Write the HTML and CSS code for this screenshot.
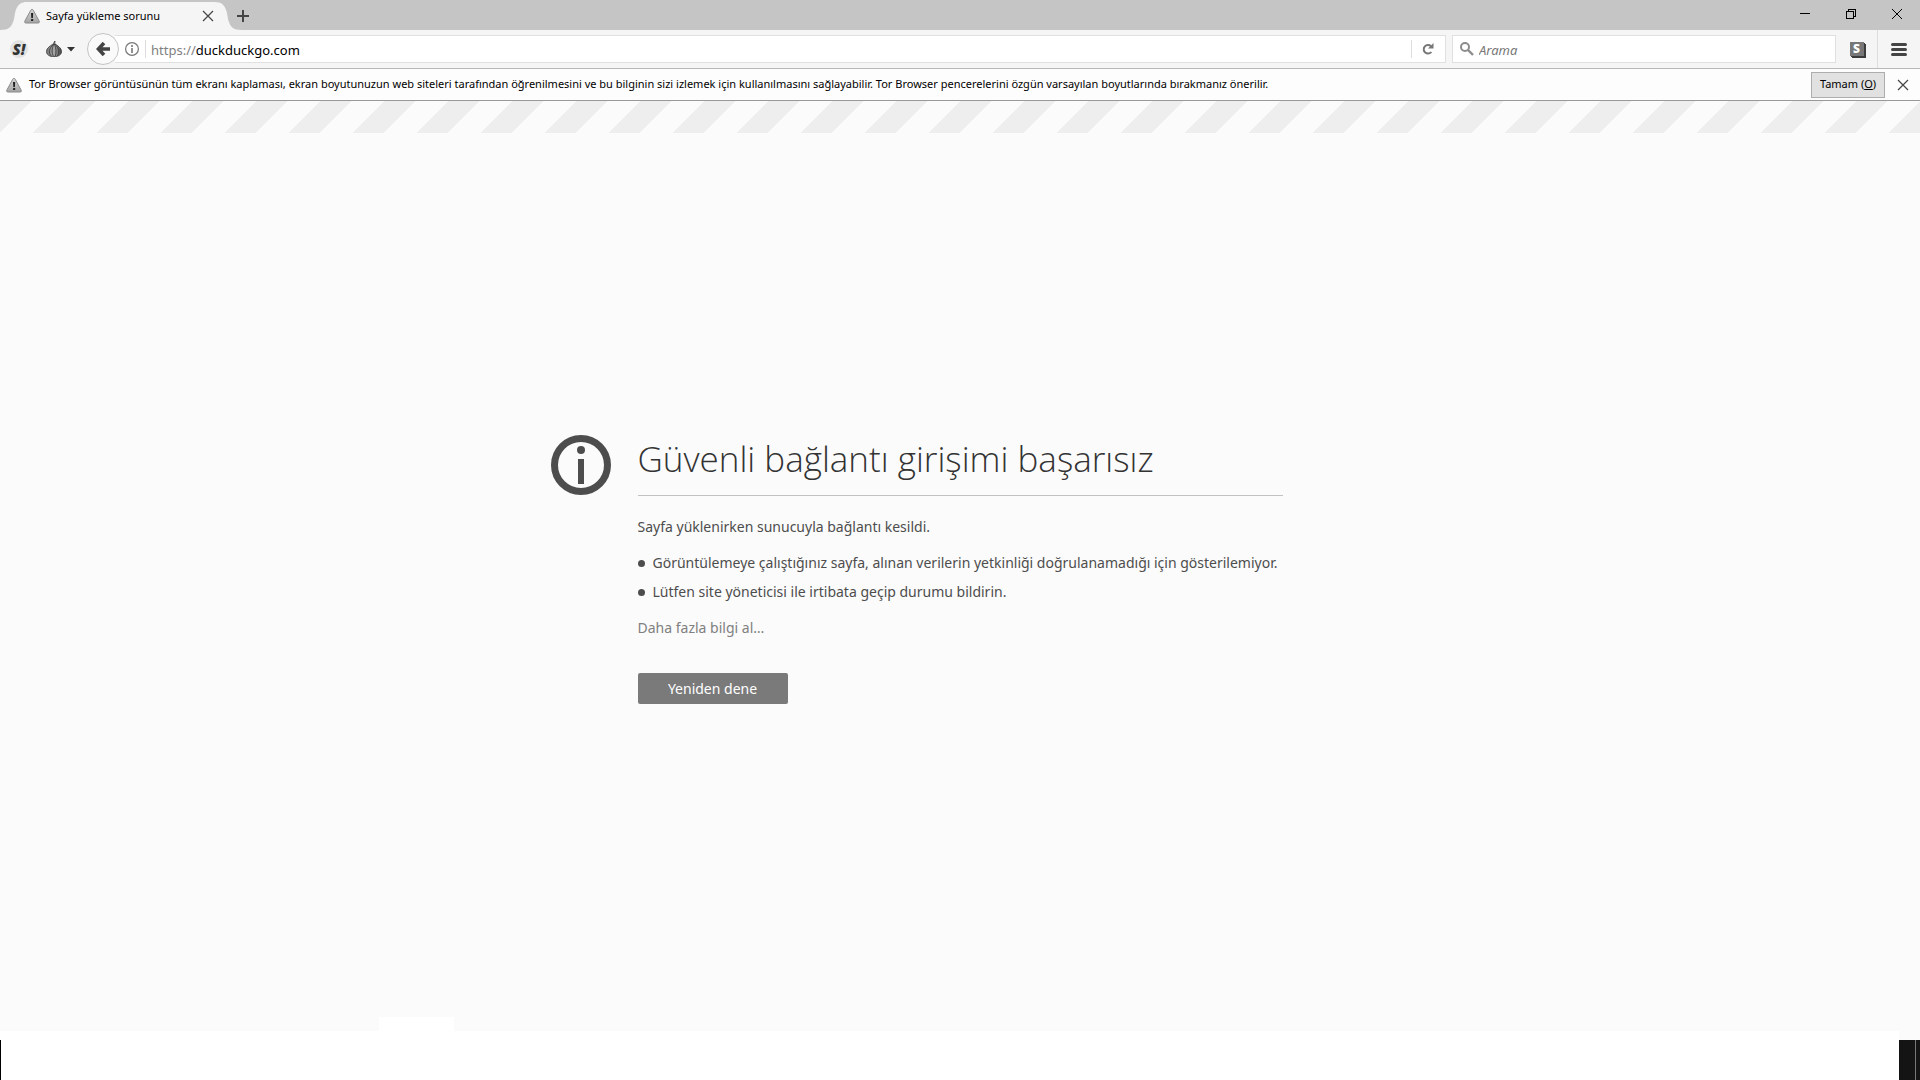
FILE: index.html
```html
<!DOCTYPE html>
<html lang="tr">
<head>
    <meta charset="UTF-8">
    <meta name="viewport" content="width=device-width, initial-scale=1.0">
    <title>Sayfa yükleme sorunu</title>
    <link rel="stylesheet" href="styles.css">
</head>
<body>
    <svg class="defs" width="0" height="0" aria-hidden="true">
        <defs>
            <linearGradient id="metal" x1="0" y1="0" x2="0" y2="1">
                <stop offset="0" stop-color="#d8d8d8"/>
                <stop offset="1" stop-color="#a4a4a4"/>
            </linearGradient>
            <linearGradient id="onion-skin" x1="0" y1="0" x2="1" y2="0">
                <stop offset="0" stop-color="#777"/>
                <stop offset="0.5" stop-color="#aaa"/>
                <stop offset="1" stop-color="#444"/>
            </linearGradient>
            <symbol id="warning" viewBox="0 0 16 16">
                <path d="M8 1.3 Q8.7 1.3 9.2 2.2 L15.2 13.2 Q15.8 15 14.2 15 H1.8 Q.2 15 .8 13.2 L6.8 2.2 Q7.3 1.3 8 1.3Z" fill="url(#metal)" stroke="#8a8a8a"/>
                <path d="M7 5h2.2l-.3 5H7.3z" fill="#222"/>
                <rect x="7" y="11" width="2.2" height="2" rx="0.6" fill="#222"/>
            </symbol>
            <symbol id="cross" viewBox="0 0 12 12">
                <path d="M1 1l10 10M11 1L1 11" fill="none" stroke="currentColor" stroke-width="1.2"/>
            </symbol>
        </defs>
    </svg>

    <!-- Tabs and window buttons -->
    <header class="titlebar">
        <div class="tab">
            <svg class="tab-edge" viewBox="0 0 28 28"><path d="M0 28C9 28 12 25 14 17L15 11C17 3 20 0 28 0V28Z"/></svg>
            <div class="tab-body">
                <svg class="icon"><use href="#warning"/></svg>
                <span class="tab-title">Sayfa yükleme sorunu</span>
                <button class="close" aria-label="Sekmeyi kapat"><svg><use href="#cross"/></svg></button>
            </div>
            <svg class="tab-edge" viewBox="0 0 28 28"><path d="M28 28C19 28 16 25 14 17L13 11C11 3 8 0 0 0V28Z"/></svg>
        </div>
        <button class="new-tab" aria-label="Yeni sekme">
            <svg width="12" height="12"><path d="M6 0v12M0 6h12" stroke="#444" stroke-width="2"/></svg>
        </button>
        <div class="window-buttons">
            <button aria-label="Simge durumuna küçült"><svg width="10" height="10" shape-rendering="crispEdges"><path d="M0 4.5h10" stroke="#000"/></svg></button>
            <button aria-label="Geri yükle"><svg width="10" height="10" shape-rendering="crispEdges"><path d="M.5 2.5h7v7h-7zM2.5 2V.5h7v7H8" fill="none" stroke="#000"/></svg></button>
            <button aria-label="Kapat"><svg width="10" height="10"><path d="M0 0l10 10M10 0L0 10" stroke="#000"/></svg></button>
        </div>
    </header>

    <!-- Address and search -->
    <nav class="navbar">
        <button class="tool script" aria-label="NoScript"><span class="script-mark">S!</span></button>
        <button class="tool onion" aria-label="Tor">
            <svg width="16" height="16" viewBox="0 0 16 16">
                <path d="M9 0C8.2.8 7.800 1.600 7.700 2.600 5.500 4.200.5 6.600.5 10.600.5 14 4 15.700 8 15.700s7.500-1.700 7.500-5.100C15.500 6.600 11 4.600 8.800 2.600 8.700 1.700 8.800.8 9 0z" fill="url(#onion-skin)" stroke="#333" stroke-width="0.8"/>
                <path d="M7.800 3C3 7.200 2 12 5.500 15.200M8 3C5.600 7.500 5.600 12 7.500 15.300M8.400 3c2 4.500 2 8.500.8 12.300M8.700 3c4.600 4.300 5 8.500 2.700 11.900" fill="none" stroke="#333" stroke-width="0.8"/>
            </svg>
            <svg width="8" height="5"><path d="M0 0h8L4 4.5z" fill="#333"/></svg>
        </button>
        <div class="location">
            <button class="back" aria-label="Geri">
                <svg width="14" height="14" viewBox="0 0 14 14"><path d="M8 1L2.400 7l5.600 6M2.500 7H14" fill="none" stroke="#444" stroke-width="3.6"/></svg>
            </button>
            <form class="urlbar">
                <button class="identity" type="button" aria-label="Site bilgileri">
                    <svg width="14" height="14"><circle cx="7" cy="7" r="6.4" fill="none" stroke="#777" stroke-width="1.2"/><path d="M7 6v5M7 3v2" stroke="#777" stroke-width="1.6"/></svg>
                </button>
                <div class="url" role="textbox" contenteditable="true" aria-label="Adres"><span class="scheme">https://</span>duckduckgo.com</div>
                <button class="reload" type="button" aria-label="Yenile">
                    <svg width="12" height="12"><path d="M9 3.200A4.300 4.300 0 1 0 9.400 9" fill="none" stroke="#777" stroke-width="2"/><path d="M11.500 0v5.500H6z" fill="#777"/></svg>
                </button>
            </form>
        </div>
        <form class="search">
            <svg width="14" height="14"><circle cx="5" cy="5" r="4" fill="none" stroke="#8c8c8c" stroke-width="2"/><path d="M8 8l5 5" stroke="#8c8c8c" stroke-width="2.4"/></svg>
            <input type="search" placeholder="Arama" aria-label="Arama">
        </form>
        <button class="tool cube" aria-label="HTTPS Everywhere"><span class="cube-mark">S</span></button>
        <button class="tool menu" aria-label="Menü">
            <svg width="16" height="13"><path d="M1.500 1.500h13M1.500 6.500h13M1.500 11.500h13" stroke="#444" stroke-width="3" stroke-linecap="round"/></svg>
        </button>
    </nav>

    <div class="notification" role="alert">
        <svg class="icon"><use href="#warning"/></svg>
        <p>Tor Browser görüntüsünün tüm ekranı kaplaması, ekran boyutunuzun web siteleri tarafından öğrenilmesini ve bu bilginin sizi izlemek için kullanılmasını sağlayabilir. Tor Browser pencerelerini özgün varsayılan boyutlarında bırakmanız önerilir.</p>
        <button class="ok">Tamam (<u>O</u>)</button>
        <button class="close" aria-label="Bildirimi kapat"><svg><use href="#cross"/></svg></button>
    </div>

    <main class="page">
        <section class="error">
            <svg class="error-icon" viewBox="0 0 60 60">
                <circle cx="30" cy="30" r="26.5" fill="none" stroke="#4d4d4d" stroke-width="7"/>
                <circle cx="30" cy="15" r="4"/>
                <rect x="27" y="24" width="6" height="25"/>
            </svg>
            <div class="error-text">
                <h1>Güvenli bağlantı girişimi başarısız</h1>
                <p>Sayfa yüklenirken sunucuyla bağlantı kesildi.</p>
                <ul>
                    <li>Görüntülemeye çalıştığınız sayfa, alınan verilerin yetkinliği doğrulanamadığı için gösterilemiyor.</li>
                    <li>Lütfen site yöneticisi ile irtibata geçip durumu bildirin.</li>
                </ul>
                <a href="#">Daha fazla bilgi al…</a>
                <button class="retry">Yeniden dene</button>
            </div>
        </section>
    </main>

    <footer class="bottom">
        <div class="bottom-tab"></div>
        <div class="bottom-end"></div>
    </footer>
</body>
</html>
```

FILE: styles.css
```css
* {
    margin: 0;
    padding: 0;
    box-sizing: border-box;
}

body {
    font-family: "Noto Sans", "Open Sans", sans-serif;
    font-size: 12px;
    color: #000;
    background: #fbfbfb;
    min-height: 100vh;
    display: flex;
    flex-direction: column;
}

button {
    font: inherit;
    color: inherit;
    background: none;
    border: none;
    display: flex;
    align-items: center;
    justify-content: center;
}

svg {
    display: block;
    flex: none;
}

.defs {
    position: absolute;
}

.icon {
    width: 16px;
    height: 16px;
}

.close {
    color: #444;
}

.close svg {
    width: 12px;
    height: 12px;
}

/* title bar */
.titlebar {
    height: 30px;
    display: flex;
    align-items: flex-end;
    background: #c5c5c5;
}

.tab {
    display: flex;
    height: 28px;
}

.tab-edge {
    width: 28px;
    height: 28px;
    fill: #f5f5f5;
}

.tab-edge:first-child {
    margin-right: -4px;
}

.tab-body {
    display: flex;
    align-items: center;
    width: 190px;
    background: #f5f5f5;
}

.tab-title {
    flex: 1;
    margin-left: 6px;
    padding-bottom: 2px;
    font-size: 11px;
}

.tab-body .close {
    width: 12px;
}

.new-tab {
    width: 12px;
    height: 28px;
    margin-left: -5px;
}

.window-buttons {
    display: flex;
    margin-left: auto;
    height: 30px;
}

.window-buttons button {
    width: 46px;
    height: 28px;
}

/* toolbar */
.navbar {
    height: 39px;
    display: flex;
    align-items: center;
    background: #f5f5f5;
    border-bottom: 1px solid #b8b8b8;
}

.tool {
    height: 38px;
}

.script {
    width: 38px;
}

.script-mark {
    width: 18px;
    border-radius: 50%;
    font: italic 800 15px/18px "Open Sans", sans-serif;
    color: #333;
    background: #e2e2e2;
}

.onion {
    width: 49px;
    padding-right: 4px;
    gap: 5px;
}

.location {
    flex: 1;
    display: flex;
    align-items: center;
}

.back {
    width: 32px;
    height: 32px;
    flex: none;
    border: 1px solid #c4c4c4;
    border-radius: 50%;
    background: #fafafa;
    z-index: 1;
}

.urlbar,
.search {
    height: 28px;
    display: flex;
    align-items: center;
    background: #fff;
    border: 1px solid #e0e0e0;
}

.urlbar {
    flex: 1;
    margin-left: -4px;
    border-left: none;
}

.identity {
    width: 31px;
    height: 18px;
    padding-left: 4px;
    border-right: 1px solid #ddd;
}

.url {
    flex: 1;
    padding: 2px 0 0 5px;
    font-size: 13px;
    line-height: 18px;
    outline: none;
}

.scheme {
    color: #808080;
}

.reload {
    width: 34px;
    height: 18px;
    padding-right: 2px;
    border-left: 1px solid #ddd;
}

.search {
    width: 384px;
    margin-left: 6px;
    padding-left: 7px;
    gap: 5px;
}

.search input {
    flex: 1;
    padding-top: 2px;
    font: italic 13px/18px "Noto Sans", "Open Sans", sans-serif;
    background: none;
    border: none;
    outline: none;
}

.search input::placeholder {
    color: #777;
}

.cube {
    width: 41px;
}

.cube-mark {
    width: 14px;
    font: 800 12px/14px "Open Sans", sans-serif;
    color: #fff;
    background: #777;
    box-shadow: 1px 1px #3c3c3c, 2px 2px #3c3c3c;
}

.menu {
    width: 43px;
    border-left: 1px solid #ddd;
}

/* notification bar */
.notification {
    height: 32px;
    display: flex;
    align-items: center;
    padding: 0 11px 0 6px;
    background: #fdfdfd;
    border-bottom: 1px solid #999;
}

.notification p {
    flex: 1;
    margin-left: 7px;
    padding-bottom: 2px;
    font-size: 11px;
}

.ok {
    width: 74px;
    height: 26px;
    padding-bottom: 2px;
    font-size: 11px;
    background: #e1e1e1;
    border: 1px solid #adadad;
    white-space: pre;
}

.notification .close {
    width: 12px;
    margin-left: 12px;
}

/* error page */
.page {
    flex: 1;
    display: flex;
    flex-direction: column;
    justify-content: center;
    padding-top: 7px;
    background: linear-gradient(-45deg, #eee 33.333%, transparent 33.333%, transparent 66.667%, #eee 66.667%) 0 0 / 64px 32px repeat-x;
}

.error {
    display: grid;
    grid-template-columns: 1fr 645px 1fr;
    font-size: 14px;
    line-height: 20px;
    color: #4d4d4d;
}

.error-icon {
    width: 60px;
    height: 60px;
    justify-self: end;
    margin-right: 27px;
    fill: #4d4d4d;
}

h1 {
    height: 61px;
    margin-bottom: 21px;
    font-family: "Open Sans", "Noto Sans", sans-serif;
    font-size: 35px;
    font-weight: 300;
    line-height: 48px;
    color: #333;
    border-bottom: 1px solid #c1c1c1;
}

.error ul {
    margin: 16px 0;
    padding-left: 15px;
}

.error li {
    list-style: none;
    display: flex;
    align-items: center;
    white-space: nowrap;
}

.error li + li {
    margin-top: 9px;
}

.error li::before {
    content: "";
    flex: none;
    width: 7px;
    height: 7px;
    margin-left: -15px;
    margin-right: 8px;
    border-radius: 50%;
    background: #4d4d4d;
}

.error a {
    color: #808080;
    text-decoration: none;
}

.retry {
    width: 150px;
    height: 31px;
    margin-top: 35px;
    color: #fff;
    background: #7a7a7a;
    border-radius: 2px;
}

/* strip below the page */
.bottom {
    position: relative;
    height: 49px;
    display: flex;
    justify-content: flex-end;
    background: #fff;
}

.bottom::before {
    content: "";
    width: 1px;
    margin: 9px auto 0 0;
    background: #000;
}

.bottom-tab {
    position: absolute;
    left: 379px;
    top: -14px;
    width: 75px;
    height: 14px;
    background: #fff;
}

.bottom-end {
    width: 21px;
    border-top: 9px solid #fbfbfb;
    background: linear-gradient(90deg, #141414 16px, #777 16px, #777 17px, #141414 17px);
}
```
